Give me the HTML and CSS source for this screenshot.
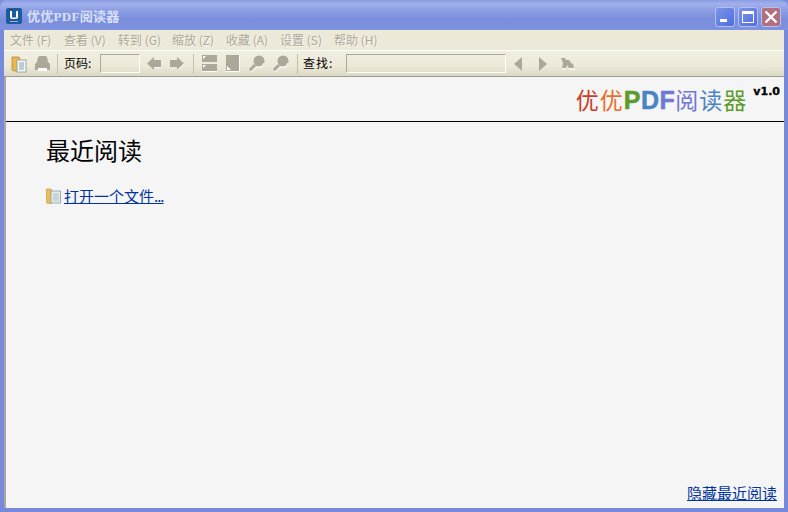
FILE: index.html
```html
<!DOCTYPE html>
<html lang="zh-CN">
<head>
    <meta charset="UTF-8">
    <meta name="viewport" content="width=device-width, initial-scale=1.0">
    <title>优优PDF阅读器</title>
    <link rel="stylesheet" href="styles.css">
</head>
<body>

<div class="window">
    <div class="titlebar">
        <svg class="app-icon" width="16" height="16" viewBox="0 0 16 16">
            <rect x="0" y="0" width="16" height="16" rx="2" fill="#1c5c9c"/>
            <path d="M4 3v6q0 2 2 2h4q2 0 2-2V3h-2v6q0 .6-.6.6H6.600q-.6 0-.6-.6V3z" fill="#fff"/>
            <rect x="4" y="13" width="8" height="1" fill="#8fb8dc"/>
        </svg>
        <span class="app-title">优优PDF阅读器</span>
        <div class="win-buttons">
            <div class="win-btn">
                <svg width="18" height="18" viewBox="0 0 18 18"><rect x="4" y="11" width="7" height="3" fill="#fff"/></svg>
            </div>
            <div class="win-btn">
                <svg width="18" height="18" viewBox="0 0 18 18"><path d="M3 3h12v12H3z M4 6v8h10V6z" fill="#fff" fill-rule="evenodd"/></svg>
            </div>
            <div class="win-btn win-close">
                <svg width="18" height="18" viewBox="0 0 18 18"><path d="M3.500 3.500l11 11M14.500 3.500l-11 11" stroke="#fff" stroke-width="2.400"/></svg>
            </div>
        </div>
    </div>

    <div class="frame">
        <div class="menubar">
            <span class="menu-item">文件 (F)</span>
            <span class="menu-item">查看 (V)</span>
            <span class="menu-item">转到 (G)</span>
            <span class="menu-item">缩放 (Z)</span>
            <span class="menu-item">收藏 (A)</span>
            <span class="menu-item">设置 (S)</span>
            <span class="menu-item">帮助 (H)</span>
        </div>

        <div class="toolbar">
            <svg class="tool" width="16" height="18" viewBox="0 0 16 18">
                <path d="M1 2h7l1 2v12H3l-2-1z" fill="#e8b850" stroke="#b88a30" stroke-width=".8"/>
                <rect x="6" y="5" width="9" height="12" fill="#f2f6f6" stroke="#8a9aa0" stroke-width=".8"/>
                <path d="M8 8h5M8 10h5M8 12h5M8 14h5" stroke="#8aa4b0" stroke-width="1"/>
            </svg>
            <svg class="tool tool-print" width="17" height="17" viewBox="0 0 17 17">
                <path d="M6 1h5q2 0 2.500 3l.5 3 2 2v6H1V9l2-2 .5-3Q4 1 6 1z" fill="#aca899"/>
                <path d="M4 13h9v3H4z" fill="#fff"/>
            </svg>
            <span class="sep"></span>
            <span class="tool-label label-page">页码:</span>
            <span class="field field-page"></span>
            <svg class="tool tool-back" width="16" height="15" viewBox="0 0 16 15">
                <path d="M8 1v3h7v7H8v3L1 7.500z" fill="#aca899"/>
                <path d="M8 14l1-1v-2h6v1H9v2z" fill="#fff"/>
            </svg>
            <svg class="tool tool-next" width="16" height="15" viewBox="0 0 16 15">
                <path d="M8 1v3H1v7h7v3l7-6.500z" fill="#aca899"/>
                <path d="M8 14l7-6.500v1L9 14z" fill="#fff"/>
            </svg>
            <span class="sep sep-wide"></span>
            <svg class="tool" width="15" height="17" viewBox="0 0 15 17">
                <rect x="0" y="0" width="15" height="7" fill="#aca899"/>
                <rect x="0" y="9" width="15" height="7" fill="#aca899"/>
                <path d="M1 1h3L1 4zM1 10h3l-3 3z" fill="#fff"/>
                <path d="M0 16h15v1H0z" fill="#fff"/>
            </svg>
            <svg class="tool tool-page" width="14" height="17" viewBox="0 0 14 17">
                <rect x="0" y="0" width="13" height="16" fill="#aca899"/>
                <path d="M1 11l4 4H1z" fill="#fff"/>
                <path d="M13 1h1v16H0v-1h13z" fill="#fff"/>
            </svg>
            <svg class="tool tool-zoom1" width="16" height="17" viewBox="0 0 16 17">
                <circle cx="10" cy="6" r="5.500" fill="#aca899"/>
                <path d="M6 10l-5 5" stroke="#aca899" stroke-width="3"/>
                <path d="M15 8l-3 4h-4l-6 5" stroke="#fff" stroke-width="1" fill="none"/>
            </svg>
            <svg class="tool tool-zoom2" width="16" height="17" viewBox="0 0 16 17">
                <circle cx="10" cy="6" r="5.500" fill="#aca899"/>
                <path d="M6 10l-5 5" stroke="#aca899" stroke-width="3"/>
                <path d="M15 8l-3 4h-4l-6 5" stroke="#fff" stroke-width="1" fill="none"/>
            </svg>
            <span class="sep sep-find"></span>
            <span class="tool-label label-find">查找:</span>
            <span class="field field-find"></span>
            <svg class="tool tool-tri" width="8" height="14" viewBox="0 0 8 14"><path d="M8 0v14L0 7z" fill="#aca899"/></svg>
            <svg class="tool tool-tri2" width="8" height="14" viewBox="0 0 8 14"><path d="M0 0v14l8-7z" fill="#aca899"/></svg>
            <svg class="tool tool-bino" width="15" height="13" viewBox="0 0 15 13">
                <path d="M1 1h4l1 2h3l2 3 2 1 1 4H9L7 8 6 11H2L3 6z" fill="#aca899"/>
                <path d="M2 12h4M9 12h6" stroke="#fff"/>
            </svg>
        </div>

        <div class="content">
            <div class="logo-row">
                <div class="logo">
                    <span class="c-red">优</span><span class="c-orange">优</span><b class="c-green">P</b><b class="c-blue">D</b><b class="c-violet">F</b><span class="c-violet">阅</span><span class="c-blue">读</span><span class="c-green">器</span>
                </div>
                <b class="version">v1.0</b>
            </div>
            <div class="recent">
                <h1>最近阅读</h1>
                <div class="open-row">
                    <svg width="15" height="16" viewBox="0 0 15 16">
                        <path d="M0 1h5l1 1v13l-4 1-2-2z" fill="#e8bc60" stroke="#c09a48" stroke-width=".6"/>
                        <rect x="5" y="3" width="9.500" height="12" fill="#e4ecec" stroke="#8a9a9a" stroke-width=".8"/>
                        <path d="M7 6h6M7 8h6M7 10h6M7 12h6" stroke="#a8bcc4"/>
                    </svg>
                    <a href="#" class="link">打开一个文件<span class="dots">...</span></a>
                </div>
            </div>
            <div class="bottom-row">
                <a href="#" class="link">隐藏最近阅读</a>
            </div>
        </div>
    </div>
</div>

</body>
</html>
```

FILE: styles.css
```css
html, body {
    margin: 0;
    padding: 0;
}
body {
    width: 788px;
    height: 512px;
    overflow: hidden;
    font-family: "Noto Sans CJK SC", "Liberation Sans", sans-serif;
    background: #7b8fdc;
}
.window {
    width: 788px;
    height: 512px;
    display: flex;
    flex-direction: column;
    box-sizing: border-box;
    border-radius: 7px 7px 0 0;
    background: #7689dd;
}
.titlebar {
    height: 30px;
    flex: none;
    display: flex;
    align-items: center;
    padding: 0 7px 0 6px;
    box-sizing: border-box;
    background: linear-gradient(to bottom, #8a9ce4 0, #a2b0ec 4px, #8c9ee4 10px, #7a8edc 20px, #7f92df 30px);
    border-radius: 7px 7px 0 0;
}
.app-icon {
    flex: none;
    margin-top: 1px;
}
.app-title {
    margin-left: 5px;
    font-size: 13px;
    font-weight: 700;
    letter-spacing: .3px;
    color: #d9e0f8;
    font-family: "Liberation Serif", "Noto Sans CJK SC", serif;
}
.win-buttons {
    margin-left: auto;
    display: flex;
    gap: 3px;
    margin-top: 4px;
}
.win-btn {
    width: 20px;
    height: 20px;
    box-sizing: border-box;
    border: 1px solid #b4c0f0;
    border-radius: 3px;
    background: linear-gradient(135deg, #7d94ea, #4f6ee0);
}
.win-btn svg {
    display: block;
}
.win-close {
    background: #b0707e;
}
.frame {
    flex: 1;
    display: flex;
    flex-direction: column;
    margin: 0 4px 4px 4px;
    min-height: 0;
}
.menubar {
    height: 20px;
    flex: none;
    display: flex;
    align-items: center;
    background: #ece9d8;
    padding: 0 0 2px 6px;
    gap: 8px;
    box-sizing: border-box;
}
.menu-item {
    font-size: 12px;
    color: #aca899;
    text-shadow: 1px 1px 0 #f8f6ec;
    width: 46px;
    white-space: nowrap;
}
.toolbar {
    height: 27px;
    flex: none;
    display: flex;
    align-items: center;
    padding-left: 7px;
    box-sizing: border-box;
    background: linear-gradient(to bottom, #f0eee0 0, #ede9d8 60%, #dcd8c6 100%);
    border-top: 1px solid #fff;
    border-bottom: 1px solid #a09c8c;
}
.tool {
    flex: none;
}
.tool-print {
    margin-left: 7px;
}
.tool-back {
    margin-left: 6px;
}
.tool-next {
    margin-left: 7px;
}
.tool-page {
    margin-left: 9px;
}
.tool-zoom1 {
    margin-left: 9px;
}
.tool-zoom2 {
    margin-left: 8px;
}
.tool-tri {
    margin-left: 8px;
}
.tool-tri2 {
    margin-left: 17px;
}
.tool-bino {
    margin-left: 13px;
}
.sep {
    width: 1px;
    height: 20px;
    background: #c4c0b0;
    margin: 0 6px 0 6px;
    flex: none;
}
.sep-wide {
    margin: 0 8px 0 8px;
}
.sep-find {
    margin: 0 5px 0 8px;
}
.tool-label {
    font-size: 12px;
    line-height: 16px;
    color: #000;
    white-space: nowrap;
    margin-top: -2px;
}
.label-page {
    width: 28px;
}
.label-find {
    width: 35px;
    letter-spacing: 1px;
}
.field {
    height: 19px;
    box-sizing: border-box;
    border: 1px solid #aca899;
    border-right-color: #fff;
    border-bottom-color: #fff;
    flex: none;
}
.field-page {
    width: 40px;
    margin-left: 8px;
}
.field-find {
    width: 160px;
    margin-left: 8px;
}
.content {
    flex: 1;
    min-height: 0;
    display: flex;
    flex-direction: column;
    background: #f5f5f5;
    border-left: 2px solid #aca899;
    box-sizing: border-box;
}
.logo-row {
    height: 44px;
    flex: none;
    display: flex;
    justify-content: flex-end;
    border-bottom: 1px solid #000;
    padding-right: 4px;
}
.logo {
    font-size: 23px;
    line-height: 26px;
    margin-top: 9px;
    white-space: nowrap;
    letter-spacing: 1px;
}
.logo b {
    font-family: "Liberation Sans", sans-serif;
    font-size: 25px;
    font-weight: 700;
    letter-spacing: .5px;
    -webkit-text-stroke: .5px currentColor;
}
.version {
    font-family: "DejaVu Sans", sans-serif;
    font-size: 11px;
    line-height: 13px;
    margin: 8px 0 0 6px;
    color: #000;
    -webkit-text-stroke: .3px #000;
}
.c-red { color: #c8402c; }
.c-orange { color: #e8702c; }
.c-green { color: #5c9c2c; }
.c-blue { color: #4a84c4; }
.c-violet { color: #7078d4; }
.recent {
    flex: 1;
    padding: 13px 0 0 40px;
}
h1 {
    margin: 0;
    font-size: 24px;
    font-weight: 400;
    line-height: 30px;
    color: #000;
}
.open-row {
    display: flex;
    align-items: center;
    gap: 3px;
    margin-top: 22px;
}
.link {
    font-size: 15px;
    line-height: 18px;
    color: #0033a0;
    text-decoration: underline;
}
.dots {
    letter-spacing: -1px;
}
.bottom-row {
    flex: none;
    display: flex;
    justify-content: flex-end;
    padding: 0 7px 6px 0;
}
```
